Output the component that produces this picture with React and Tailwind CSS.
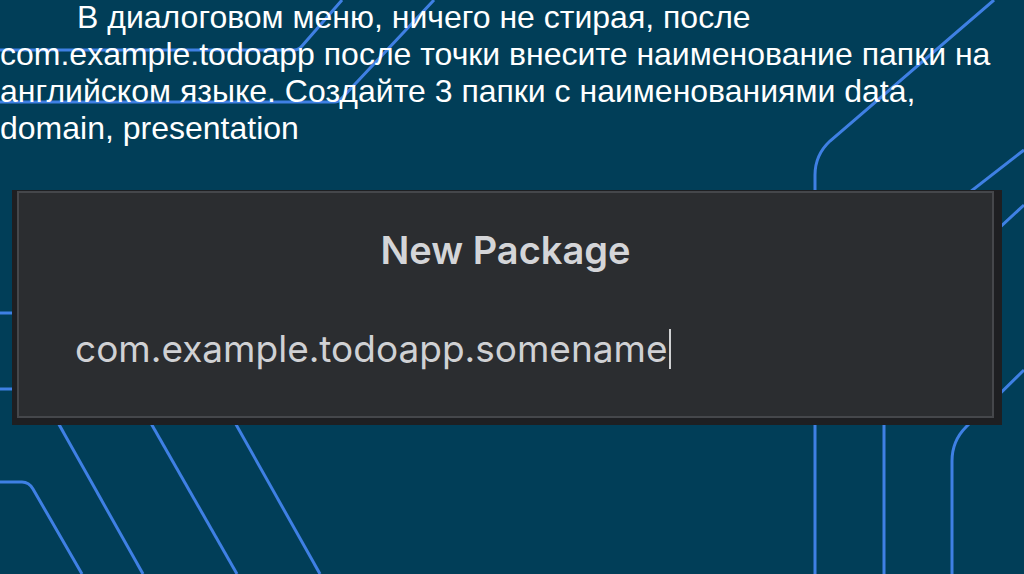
export default function App() {
  const lines = [
    "M0 50 H294 Q299 50 302 46 L342 0",
    "M0 102 H334 Q339 102 342 98 L434 0",
    "M994 0 L830 141 Q815 155 815 175 V574",
    "M1024 150 L880 262",
    "M1024 205 L900 320 Q884 335 884 355 V574",
    "M1024 370 L966 427 Q952 441 952 461 V574",
    "M0 313 H40",
    "M0 389 H40",
    "M0 482 H22 Q29 482 33 489 L82 574",
    "M20 355 L143 574",
    "M112 355 L237 574",
    "M197 355 L320 574",
  ];

  return (
    <div className="relative w-[1024px] h-[574px] overflow-hidden bg-[#013e58]">
      {/* decorative background lines */}
      <svg
        className="absolute inset-0"
        width="1024"
        height="574"
        viewBox="0 0 1024 574"
        fill="none"
      >
        {lines.map((d, i) => (
          <path key={i} d={d} stroke="#3f80e4" strokeWidth="3" />
        ))}
      </svg>

      <div className="relative">
        {/* Instruction text */}
        <div className="-mt-[1px] text-white text-[32px] leading-[37px] font-['Liberation_Sans',Arial,sans-serif] whitespace-nowrap">
          <div className="pl-[77px]">В диалоговом меню, ничего не стирая, после</div>
          <div>com.example.todoapp после точки внесите наименование папки на</div>
          <div>английском языке. Создайте 3 папки с наименованиями data,</div>
          <div>domain, presentation</div>
        </div>

        {/* Dialog screenshot */}
        <div className="mt-[43px] ml-[12px] w-[990px] h-[235px] bg-[#1e1f22] pl-[5px] pt-[1px] pr-[8px] pb-[7px]">
          <div className="h-full border-2 border-[#45474b] bg-[#2b2d30] font-['Inter',sans-serif]">
            <div className="pt-[34px] text-center text-[38px] font-semibold leading-[46px] text-[#d4d5d8]">
              New Package
            </div>
            <div className="mt-[54px] pl-[56px] flex items-center text-[37px] leading-[44px] text-[#d0d1d4]">
              <span>com.example.todoapp.somename</span>
              <span className="ml-[1px] w-[2px] h-[40px] bg-[#cfd0d2]" />
            </div>
          </div>
        </div>
      </div>
    </div>
  );
}
